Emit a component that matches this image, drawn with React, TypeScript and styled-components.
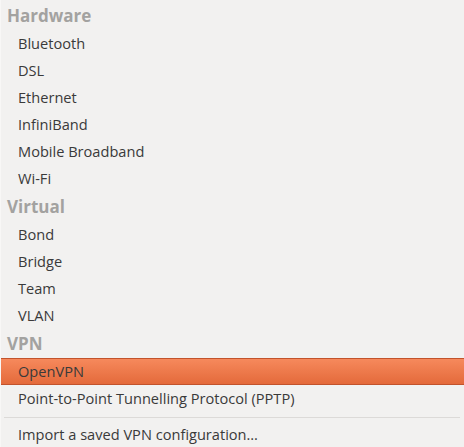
import { createGlobalStyle, styled } from "styled-components";

const GlobalStyle = createGlobalStyle`
  html, body {
    margin: 0;
    padding: 0;
    background: #f2f1f0;
  }
`;

const Menu = styled.div`
  display: flex;
  flex-direction: column;
  width: 464px;
  height: 447px;
  padding-top: 1px;
  box-sizing: border-box;
  background: #f2f1f0;
  border-left: 1px solid #f8f7f6;
  font-family: "Open Sans", "Noto Sans", sans-serif;
  overflow: hidden;
`;

const Header = styled.div`
  display: flex;
  align-items: center;
  height: 29px;
  padding-left: 6px;
  padding-bottom: 1px;
  box-sizing: border-box;
  font-size: 17px;
  font-weight: 700;
  color: #a3a2a0;
`;

const Item = styled.div<{ $active?: boolean }>`
  display: flex;
  align-items: center;
  height: 27px;
  padding-left: 17px;
  padding-bottom: 1px;
  font-size: 14.6px;
  color: #3a3a3a;
  box-sizing: border-box;
  ${({ $active }) =>
    $active &&
    `
    background: linear-gradient(#f6895c, #e46a3b);
    border-top: 1px solid #c2532c;
    border-bottom: 1px solid #c2532c;
    margin-left: -1px;
    padding-left: 18px;
  `}
`;

const Separator = styled.div`
  height: 1px;
  margin: 5px 4px 5px 3px;
  background: #dcdad8;
`;

const sections = [
  {
    title: "Hardware",
    items: ["Bluetooth", "DSL", "Ethernet", "InfiniBand", "Mobile Broadband", "Wi-Fi"],
  },
  { title: "Virtual", items: ["Bond", "Bridge", "Team", "VLAN"] },
  {
    title: "VPN",
    items: ["OpenVPN", "Point-to-Point Tunnelling Protocol (PPTP)"],
  },
];

export default function App() {
  return (
    <>
      <GlobalStyle />
      <Menu>
        {sections.map((s) => (
          <div key={s.title}>
            <Header>{s.title}</Header>
            {s.items.map((it) => (
              <Item key={it} $active={it === "OpenVPN"}>
                {it}
              </Item>
            ))}
          </div>
        ))}
        <Separator />
        <Item>Import a saved VPN configuration…</Item>
      </Menu>
    </>
  );
}
